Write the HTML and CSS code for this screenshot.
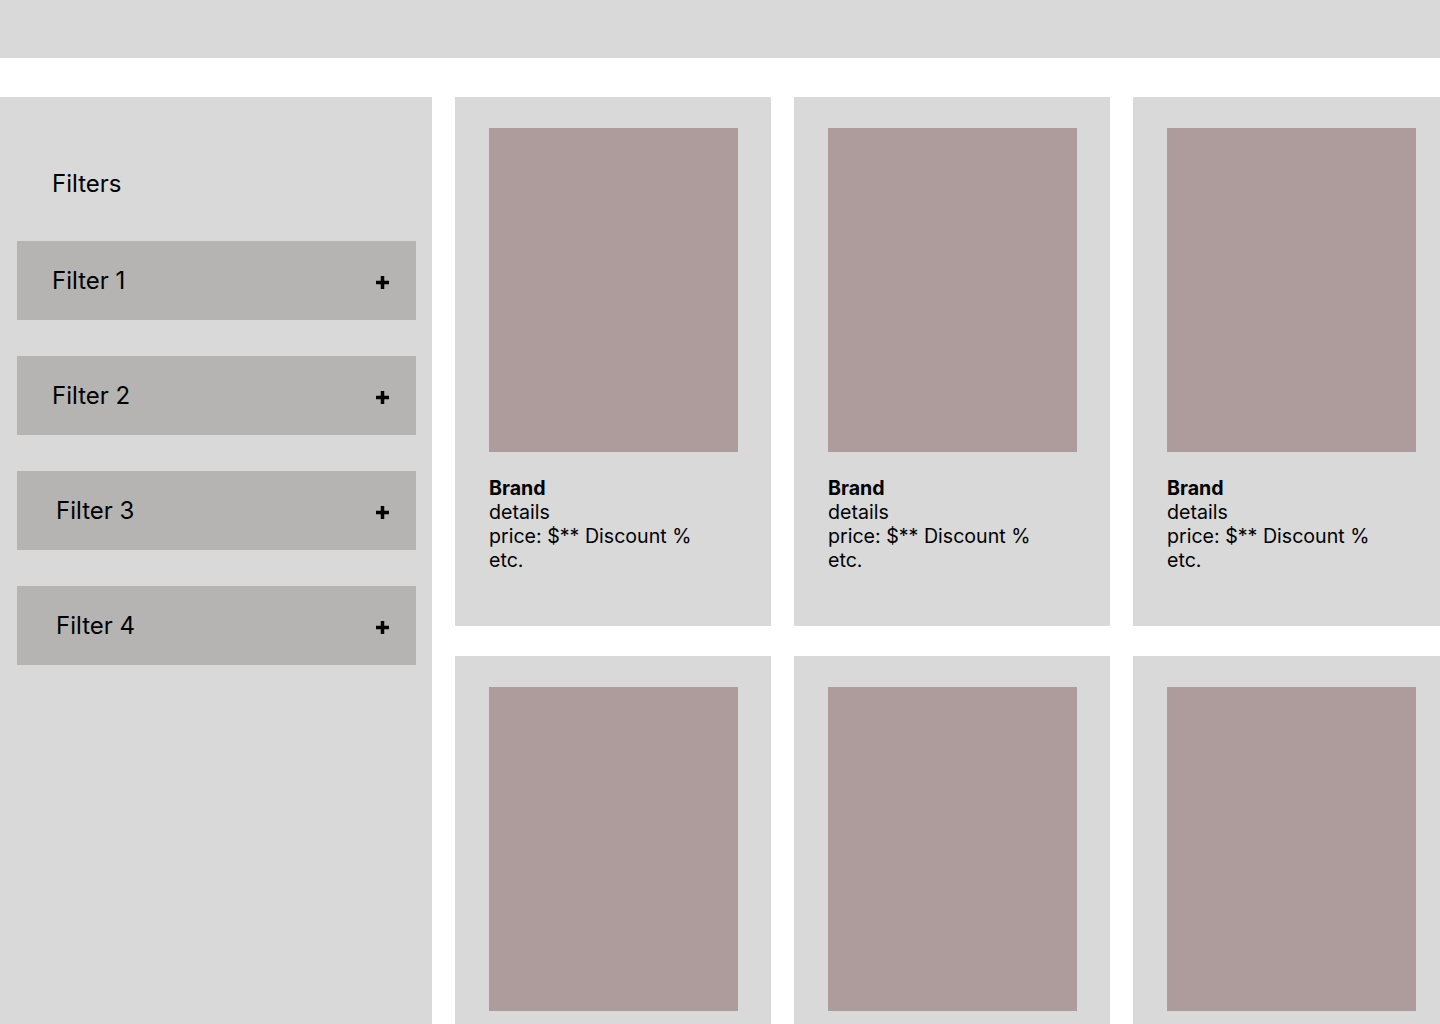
FILE: index.html
```html
<!DOCTYPE html>
<html lang="en">
<head>
    <meta charset="UTF-8">
    <meta name="viewport" content="width=device-width, initial-scale=1.0">
    <title>Shop</title>
    <link rel="stylesheet" href="styles.css">
</head>
<body>
    <header class="top-bar"></header>

    <main class="layout">
        <aside class="sidebar">
            <h2 class="sidebar-title">Filters</h2>
            <div class="filter-list">
                <button class="filter-btn">Filter 1 <svg class="plus" viewBox="0 0 13 13"><rect x="4.75" y="0" width="3.5" height="13"/><rect x="0" y="4.75" width="13" height="3.5"/></svg></button>
                <button class="filter-btn">Filter 2 <svg class="plus" viewBox="0 0 13 13"><rect x="4.75" y="0" width="3.5" height="13"/><rect x="0" y="4.75" width="13" height="3.5"/></svg></button>
                <button class="filter-btn shifted">Filter 3 <svg class="plus" viewBox="0 0 13 13"><rect x="4.75" y="0" width="3.5" height="13"/><rect x="0" y="4.75" width="13" height="3.5"/></svg></button>
                <button class="filter-btn shifted">Filter 4 <svg class="plus" viewBox="0 0 13 13"><rect x="4.75" y="0" width="3.5" height="13"/><rect x="0" y="4.75" width="13" height="3.5"/></svg></button>
            </div>
        </aside>

        <section class="products">
            <div class="card">
                <div class="card-image"></div>
                <div class="card-info">
                    <strong>Brand</strong>
                    <span>details</span>
                    <span>price: $** Discount %</span>
                    <span>etc.</span>
                </div>
            </div>
            <div class="card">
                <div class="card-image"></div>
                <div class="card-info">
                    <strong>Brand</strong>
                    <span>details</span>
                    <span>price: $** Discount %</span>
                    <span>etc.</span>
                </div>
            </div>
            <div class="card">
                <div class="card-image"></div>
                <div class="card-info">
                    <strong>Brand</strong>
                    <span>details</span>
                    <span>price: $** Discount %</span>
                    <span>etc.</span>
                </div>
            </div>
            <div class="card">
                <div class="card-image"></div>
                <div class="card-info">
                    <strong>Brand</strong>
                    <span>details</span>
                    <span>price: $** Discount %</span>
                    <span>etc.</span>
                </div>
            </div>
            <div class="card">
                <div class="card-image"></div>
                <div class="card-info">
                    <strong>Brand</strong>
                    <span>details</span>
                    <span>price: $** Discount %</span>
                    <span>etc.</span>
                </div>
            </div>
            <div class="card">
                <div class="card-image"></div>
                <div class="card-info">
                    <strong>Brand</strong>
                    <span>details</span>
                    <span>price: $** Discount %</span>
                    <span>etc.</span>
                </div>
            </div>
        </section>
    </main>
</body>
</html>
```

FILE: styles.css
```css
* {
    margin: 0;
    padding: 0;
    box-sizing: border-box;
    font-family: 'Inter', 'Liberation Sans', sans-serif;
}

body {
    background: #ffffff;
    color: #000000;
    overflow-x: hidden;
}

.top-bar {
    height: 58px;
    background: #d9d9d9;
}

.layout {
    display: flex;
    gap: 23px;
    margin-top: 39px;
}

.sidebar {
    flex: 0 0 432px;
    background: #d9d9d9;
    padding: 72px 16px 0 17px;
}

.sidebar-title {
    font-size: 24px;
    font-weight: 400;
    line-height: 30px;
    padding-left: 35px;
    margin-bottom: 42px;
}

.filter-list {
    display: flex;
    flex-direction: column;
    gap: 36px;
}

.filter-btn {
    height: 79px;
    background: #b5b4b2;
    border: none;
    display: flex;
    align-items: center;
    justify-content: space-between;
    padding: 0 27px 0 35px;
    font-size: 24px;
    color: #000000;
    text-align: left;
    cursor: pointer;
}

.filter-btn.shifted {
    padding-left: 39px;
}

.plus {
    width: 13px;
    height: 13px;
    fill: #000000;
    margin-top: 3px;
}

.products {
    display: grid;
    grid-template-columns: repeat(3, 316px);
    column-gap: 23px;
    row-gap: 30px;
    flex: none;
}

.card {
    height: 529px;
    background: #d9d9d9;
    padding: 31px 33px 0 34px;
}

.card-image {
    width: 249px;
    height: 324px;
    background: #ae9c9c;
}

.card-info {
    display: flex;
    flex-direction: column;
    margin-top: 24px;
    font-size: 19.6px;
    line-height: 24px;
}

.card-info strong {
    font-weight: 700;
}
```
